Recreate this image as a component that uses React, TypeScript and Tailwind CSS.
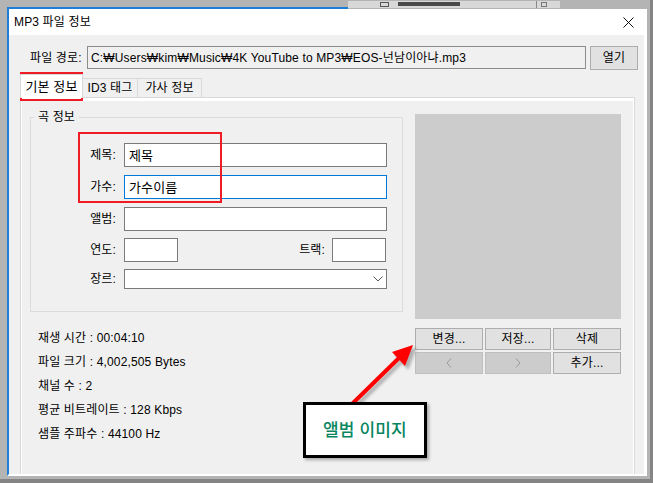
import React from "react";

const Btn = ({ children, w, disabled }: { children: React.ReactNode; w: string; disabled?: boolean }) => (
  <div
    className={`${w} h-[22px] flex items-center justify-center border ${
      disabled ? "bg-[#cccccc] border-[#bfbfbf]" : "bg-[#e1e1e1] border-[#adadad]"
    }`}
  >
    {children}
  </div>
);

const Chev = ({ dir }: { dir: "l" | "r" }) => (
  <svg width="6" height="10" viewBox="0 0 6 10">
    <path
      d={dir === "l" ? "M5 0.5 L1 5 L5 9.5" : "M1 0.5 L5 5 L1 9.5"}
      fill="none"
      stroke="#9a9a9a"
      strokeWidth="1"
    />
  </svg>
);

const Row = ({ label, children, mt }: { label: string; children: React.ReactNode; mt: string }) => (
  <div className={`flex items-center ${mt}`}>
    <div className="w-[85px] text-right">{label}</div>
    <div className="ml-[8px] flex items-center">{children}</div>
  </div>
);

const Box = ({ w, h = "h-[24px]", blue, text }: { w: string; h?: string; blue?: boolean; text?: string }) => (
  <div
    className={`${w} ${h} bg-white border flex items-center pl-[4px] text-[13px] ${
      blue ? "border-[#0078d7]" : "border-[#7a7a7a]"
    }`}
  >
    {text}
  </div>
);

export default function App() {
  return (
    <div className="relative w-[653px] h-[483px] overflow-hidden bg-[#b4b4b4] border-r-[3px] border-b-[4px] border-[#848484] font-['Liberation_Sans','Noto_Sans_CJK_KR',sans-serif] text-[12px] tracking-[0.15px] text-black leading-none">
      <div className="pl-[7px] pt-[9px]">
        <div className="w-[640px] h-[467px] flex flex-col border-l-2 border-l-[#1c7ed6] border-r-[3px] border-r-white border-b-2 border-b-white bg-[#f0f0f0]">
          {/* title bar */}
          <div className="h-[26px] bg-white flex items-center justify-between pl-[5px] pr-[10px]">
            <span className="text-[12px]">MP3 파일 정보</span>
            <svg width="11" height="11" viewBox="0 0 11 11">
              <path d="M0.5 0.5 L10.5 10.5 M10.5 0.5 L0.5 10.5" stroke="#111" strokeWidth="1" />
            </svg>
          </div>

          <div className="flex-1 flex flex-col pt-[11px]">
            {/* path row */}
            <div className="flex items-center h-[23px] pl-[21px]">
              <div className="w-[57px]">파일 경로:</div>
              <div className="w-[499px] h-[23px] border border-[#8c8c8c] bg-[#f0f0f0] flex items-center pl-[3px] whitespace-nowrap overflow-hidden">
                C:₩Users₩kim₩Music₩4K YouTube to MP3₩EOS-넌남이아냐.mp3
              </div>
              <div className="ml-[4px] w-[48px] h-[24px] border border-[#adadad] bg-[#e1e1e1] flex items-center justify-center">
                열기
              </div>
            </div>

            {/* tabs */}
            <div className="mt-[5px] ml-[11px] h-[24px] flex items-end relative z-10">
              <div className="w-[63px] h-[24px] bg-white border border-[#d9d9d9] border-b-0 flex items-center justify-center text-[13px]">
                기본 정보
              </div>
              <div className="w-[55px] h-[20px] bg-[#f0f0f0] border border-[#d9d9d9] border-l-0 flex items-center justify-center">
                ID3 태그
              </div>
              <div className="w-[64px] h-[20px] bg-[#f0f0f0] border border-[#d9d9d9] border-l-0 flex items-center justify-center">
                가사 정보
              </div>
            </div>

            {/* panel */}
            <div className="-mt-[1px] ml-[11px] w-[615px] flex-1 border border-[#d9d9d9] border-b-0 bg-white flex flex-col">
              <div className="mt-[3px] mx-[1px] flex-1 bg-[#f0f0f0] flex pl-[8px]">
                {/* left column */}
                <div className="flex flex-col">
                  <div className="relative mt-[16px] w-[373px] h-[195px] border border-[#dcdcdc] pt-[25px]">
                    <div className="absolute -top-[7px] left-[3px] px-[4px] bg-[#f0f0f0]">곡 정보</div>
                    <Row label="제목:" mt="">
                      <Box w="w-[263px]" text="제목" />
                    </Row>
                    <Row label="가수:" mt="mt-[8px]">
                      <Box w="w-[263px]" blue text="가수이름" />
                    </Row>
                    <Row label="앨범:" mt="mt-[8px]">
                      <Box w="w-[263px]" />
                    </Row>
                    <Row label="연도:" mt="mt-[7px]">
                      <Box w="w-[54px]" />
                      <div className="w-[147px] text-right">트랙:</div>
                      <div className="ml-[7px]">
                        <Box w="w-[54px]" />
                      </div>
                    </Row>
                    <Row label="장르:" mt="mt-[7px]">
                      <div className="w-[263px] h-[20px] bg-white border border-[#7a7a7a] flex items-center justify-end pr-[3px]">
                        <svg width="10" height="6" viewBox="0 0 10 6">
                          <path d="M0.5 0.5 L5 5 L9.5 0.5" fill="none" stroke="#555" strokeWidth="1" />
                        </svg>
                      </div>
                    </Row>
                  </div>
                  <div className="mt-[14px] pl-[8px] leading-[24px]">
                    <div>재생 시간 : 00:04:10</div>
                    <div>파일 크기 : 4,002,505 Bytes</div>
                    <div>채널 수 : 2</div>
                    <div>평균 비트레이트 : 128 Kbps</div>
                    <div>샘플 주파수 : 44100 Hz</div>
                  </div>
                </div>

                {/* right column */}
                <div className="ml-[12px] flex flex-col">
                  <div className="mt-[13px] w-[206px] h-[205px] bg-[#cccccc]" />
                  <div className="mt-[9px] flex gap-[2px]">
                    <Btn w="w-[68px]">변경...</Btn>
                    <Btn w="w-[66px]">저장...</Btn>
                    <Btn w="w-[68px]">삭제</Btn>
                  </div>
                  <div className="mt-[2px] flex gap-[2px]">
                    <Btn w="w-[68px]" disabled>
                      <Chev dir="l" />
                    </Btn>
                    <Btn w="w-[66px]" disabled>
                      <Chev dir="r" />
                    </Btn>
                    <Btn w="w-[68px]">추가...</Btn>
                  </div>
                </div>
              </div>
            </div>
          </div>
        </div>
      </div>

      {/* desktop bits behind the dialog top */}
      <div className="absolute left-[7px] top-[7px] w-[341px] h-[2px] bg-[#1c7ed6]" />
      <div className="absolute left-[348px] top-[1px] w-[212px] h-[7px] bg-[#d8d8d8]">
        <div className="absolute left-[32px] top-[1px] w-[9px] h-[5px] border border-[#555]" />
        <div className="absolute left-[50px] top-[1px] w-[62px] h-[4px] bg-[#4a4a4a]" />
        <div className="absolute left-[188px] top-0 w-[1px] h-[7px] bg-[#888]" />
        <div className="absolute left-[193px] top-[1px] w-[6px] h-[5px] border border-[#777]" />
      </div>

      {/* annotations */}
      <div className="absolute left-[20px] top-[72px] w-[63px] h-[29px] border-2 border-[#ee1c24]" />
      <div className="absolute left-[78px] top-[132px] w-[144px] h-[71px] border-2 border-[#ee1c24]" />

      <svg className="absolute left-0 top-0 pointer-events-none" width="653" height="483" viewBox="0 0 653 483">
        <defs>
          <filter id="sh" x="-20%" y="-20%" width="140%" height="140%">
            <feGaussianBlur stdDeviation="1.5" />
          </filter>
        </defs>
        <g transform="translate(3,3)" fill="#7a7a7a" stroke="#7a7a7a" opacity="0.55" filter="url(#sh)">
          <line x1="352" y1="404" x2="400" y2="357" strokeWidth="4" />
          <polygon points="413,345 392,352 405,366" />
        </g>
        <line x1="352" y1="404" x2="400" y2="357" stroke="#ff0000" strokeWidth="4" />
        <polygon points="413,345 392,352 405,366" fill="#ff0000" />
      </svg>

      <div className="absolute left-[303px] top-[402px] w-[124px] h-[56px] border-[3px] border-black bg-white flex items-center justify-center shadow-[2px_2px_3px_rgba(0,0,0,0.3)]">
        <span className="text-[17px] text-[#078560] font-medium">앨범 이미지</span>
      </div>
    </div>
  );
}
